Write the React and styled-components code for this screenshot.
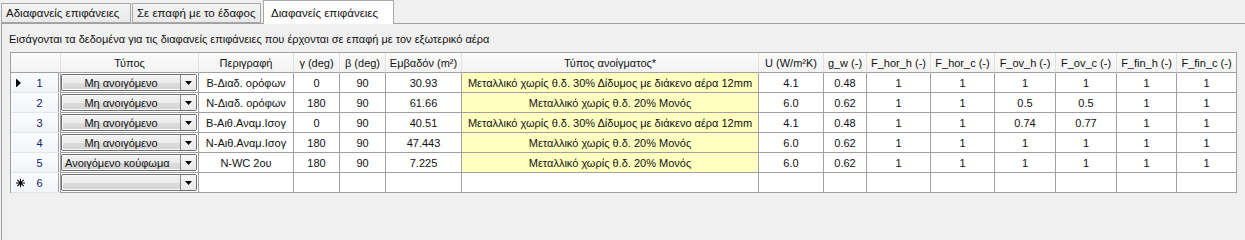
import styled, { createGlobalStyle } from "styled-components";

const GlobalStyle = createGlobalStyle`
  body {
    margin: 0;
    background: #f0f0f0;
    font-family: "Liberation Sans", Arial, sans-serif;
    font-size: 11px;
    color: #111;
    overflow: hidden;
  }
`;

const COLS = [50, 138, 95, 46, 46, 76, 297, 65, 43, 64, 64, 61, 61, 60, 60];

const HEADERS = [
  "",
  "Τύπος",
  "Περιγραφή",
  "γ (deg)",
  "β (deg)",
  "Εμβαδόν (m²)",
  "Τύπος ανοίγματος*",
  "U (W/m²K)",
  "g_w (-)",
  "F_hor_h (-)",
  "F_hor_c (-)",
  "F_ov_h (-)",
  "F_ov_c (-)",
  "F_fin_h (-)",
  "F_fin_c (-)",
];

const ROWS = [
  ["Μη ανοιγόμενο", "Β-Διαδ. ορόφων", "0", "90", "30.93", "Μεταλλικό χωρίς θ.δ. 30% Δίδυμος με διάκενο αέρα 12mm", "4.1", "0.48", "1", "1", "1", "1", "1", "1"],
  ["Μη ανοιγόμενο", "Ν-Διαδ. ορόφων", "180", "90", "61.66", "Μεταλλικό χωρίς θ.δ. 20% Μονός", "6.0", "0.62", "1", "1", "0.5", "0.5", "1", "1"],
  ["Μη ανοιγόμενο", "Β-Αιθ.Αναμ.Ισογ", "0", "90", "40.51", "Μεταλλικό χωρίς θ.δ. 30% Δίδυμος με διάκενο αέρα 12mm", "4.1", "0.48", "1", "1", "0.74", "0.77", "1", "1"],
  ["Μη ανοιγόμενο", "Ν-Αιθ.Αναμ.Ισογ", "180", "90", "47.443", "Μεταλλικό χωρίς θ.δ. 20% Μονός", "6.0", "0.62", "1", "1", "1", "1", "1", "1"],
  ["Ανοιγόμενο κούφωμα", "N-WC 2ου", "180", "90", "7.225", "Μεταλλικό χωρίς θ.δ. 20% Μονός", "6.0", "0.62", "1", "1", "1", "1", "1", "1"],
  ["", "", "", "", "", "", "", "", "", "", "", "", "", ""],
];

const TabStrip = styled.div`
  display: flex;
  align-items: flex-end;
  height: 23px;
  padding-left: 1px;
  font-size: 11.5px;
`;

const Tab = styled.div`
  box-sizing: border-box;
  height: ${({ active }) => (active ? "24px" : "20px")};
  margin-bottom: ${({ active }) => (active ? "-1px" : "0")};
  margin-left: ${({ active }) => (active ? "1px" : "0")};
  margin-right: 1px;
  width: ${({ w }) => w}px;
  padding: 0 0 0 ${({ active }) => (active ? "7px" : "4px")};
  display: flex;
  align-items: center;
  border: 1px solid #a8a8a8;
  border-bottom: ${({ active }) => (active ? "none" : "1px solid #a8a8a8")};
  background: ${({ active }) =>
    active ? "#ffffff" : "linear-gradient(#f4f4f4, #e9e9e9)"};
  position: relative;
  z-index: ${({ active }) => (active ? 2 : 1)};
  white-space: nowrap;
  overflow: hidden;
`;

const Panel = styled.div`
  border-top: 1px solid #a0a0a0;
  border-left: 1px solid #a0a0a0;
  margin-left: 1px;
  padding: 8px 0 0 8px;
  min-height: calc(100vh - 23px);
  box-sizing: border-box;
`;

const Caption = styled.div`
  line-height: 14px;
  margin: 0 0 6px -1px;
  white-space: nowrap;
`;

const Grid = styled.div`
  display: grid;
  grid-template-columns: ${COLS.map((c) => `${c}px`).join(" ")};
  grid-auto-rows: 20px;
  width: max-content;
  border-top: 1px solid #a0a0a0;
  border-left: 1px solid #a0a0a0;
  background: #fff;
`;

const HeadCell = styled.div`
  box-sizing: border-box;
  display: flex;
  align-items: center;
  justify-content: center;
  background: linear-gradient(#fbfbfb, #f3f3f3);
  border-right: 1px solid ${({ last }) => (last ? "#a0a0a0" : "#e2e2e2")};
  border-bottom: 1px solid #a0a0a0;
  white-space: nowrap;
  overflow: hidden;
  color: #111;
`;

const RowHead = styled.div`
  box-sizing: border-box;
  position: relative;
  display: flex;
  align-items: center;
  justify-content: center;
  padding-left: 10px;
  background: linear-gradient(#fbfcfe, #f2f5f9);
  border-right: 3px double #a0a0a0;
  border-bottom: 1px solid #e3e6ea;
  color: #14206a;
`;

const Marker = styled.span`
  position: absolute;
  left: 5px;
  top: 50%;
  transform: translateY(-50%);
  display: flex;
`;

const Cell = styled.div`
  box-sizing: border-box;
  display: flex;
  align-items: center;
  justify-content: center;
  background: ${({ yellow }) => (yellow ? "#ffffc0" : "#ffffff")};
  border-right: 1px solid #a0a0a0;
  border-bottom: 1px solid #a0a0a0;
  white-space: nowrap;
  overflow: hidden;
  color: #111;
`;

const ComboCell = styled.div`
  box-sizing: border-box;
  padding: 1px 1px 1px 0;
  border-right: 1px solid #a0a0a0;
  border-bottom: 1px solid #a0a0a0;
  background: #fff;
`;

const Combo = styled.div`
  box-sizing: border-box;
  height: 100%;
  display: flex;
  border: 1px solid #6f6f6f;
  border-radius: 2px;
  background: linear-gradient(#f2f2f2 0%, #ebebeb 50%, #dddddd 51%, #d2d2d2 100%);
  box-shadow: inset 0 0 0 1px #fcfcfc;
`;

const ComboText = styled.div`
  flex: 1;
  display: flex;
  align-items: center;
  justify-content: ${({ left }) => (left ? "flex-start" : "center")};
  padding-left: ${({ left }) => (left ? "3px" : "0")};
  white-space: nowrap;
  overflow: hidden;
  color: #111;
`;

const ComboArrow = styled.div`
  width: 15px;
  display: flex;
  align-items: center;
  justify-content: center;
  border-left: 1px solid #8a8a8a;
  background: linear-gradient(#f7f7f7, #e6e6e6);
`;

function Arrow() {
  return (
    <svg width="7" height="4" viewBox="0 0 7 4">
      <path d="M0 0H7L3.5 4Z" fill="#000" />
    </svg>
  );
}

function RowPointer() {
  return (
    <svg width="5" height="9" viewBox="0 0 5 9">
      <path d="M0 0L5 4.5L0 9Z" fill="#000" />
    </svg>
  );
}

function NewRowStar() {
  return (
    <svg width="9" height="9" viewBox="0 0 9 9">
      <path
        d="M4.5 0V9M0 4.5H9M1.3 1.3L7.7 7.7M7.7 1.3L1.3 7.7"
        stroke="#000"
        strokeWidth="1.1"
      />
    </svg>
  );
}

const TABS = [
  { label: "Αδιαφανείς επιφάνειες", w: 130 },
  { label: "Σε επαφή με το έδαφος", w: 129 },
  { label: "Διαφανείς επιφάνειες", w: 131, active: true },
];

export default function App() {
  return (
    <>
      <GlobalStyle />
      <TabStrip>
        {TABS.map((t) => (
          <Tab key={t.label} w={t.w} active={t.active}>
            {t.label}
          </Tab>
        ))}
      </TabStrip>
      <Panel>
        <Caption>
          Εισάγονται τα δεδομένα για τις διαφανείς επιφάνειες που έρχονται σε
          επαφή με τον εξωτερικό αέρα
        </Caption>
        <Grid>
          {HEADERS.map((h, i) => (
            <HeadCell key={i} last={i === HEADERS.length - 1}>
              {h}
            </HeadCell>
          ))}
          {ROWS.map((row, r) => [
            <RowHead key={`h${r}`}>
              {r === 0 && (
                <Marker>
                  <RowPointer />
                </Marker>
              )}
              {r === ROWS.length - 1 && (
                <Marker>
                  <NewRowStar />
                </Marker>
              )}
              {r + 1}
            </RowHead>,
            <ComboCell key={`c${r}`}>
              <Combo>
                <ComboText left={row[0].length > 15}>{row[0]}</ComboText>
                <ComboArrow>
                  <Arrow />
                </ComboArrow>
              </Combo>
            </ComboCell>,
            ...row.slice(1).map((v, i) => (
              <Cell key={`${r}-${i}`} yellow={i === 4 && r < ROWS.length - 1}>
                {v}
              </Cell>
            )),
          ])}
        </Grid>
      </Panel>
    </>
  );
}
